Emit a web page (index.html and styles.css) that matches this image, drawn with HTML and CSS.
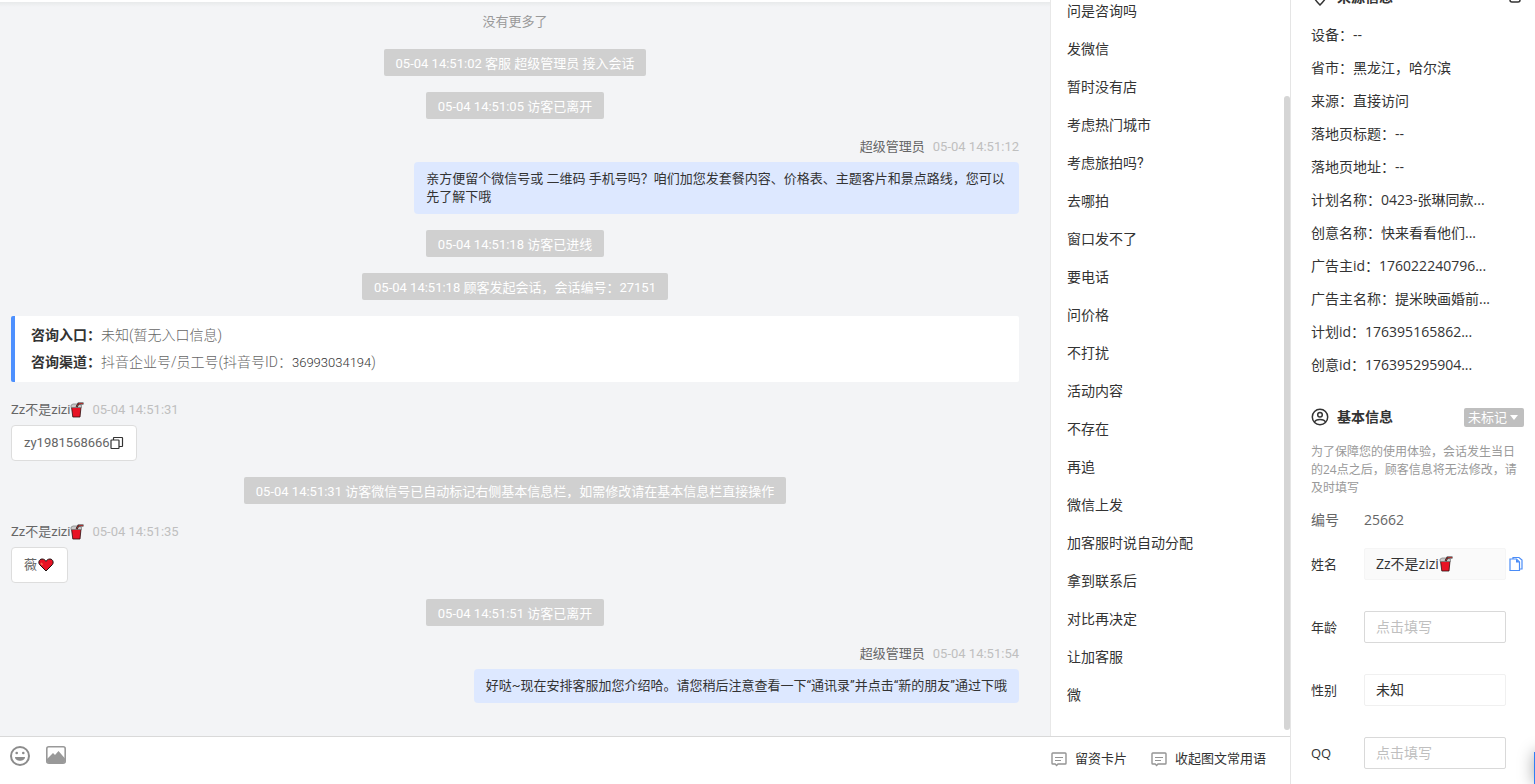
FILE: index.html
```html
<!DOCTYPE html>
<html lang="zh-CN">
<head>
<meta charset="utf-8">
<title>客服会话</title>
<link rel="stylesheet" href="styles.css">
</head>
<body>
<svg class="sprite" aria-hidden="true">
  <symbol id="cup" viewBox="0 0 14 16">
    <path d="M1.500 5h9.500l-1 10H2.800z" fill="#e81224" stroke="#2b1010" stroke-width=".8"/>
    <path d="M1 3.200 3 2h5l3.500 1.200V5.500H1z" fill="#c9c9c9" stroke="#777" stroke-width=".7"/>
    <path d="M6.500 5 8.500 1.500h5" fill="none" stroke="#222" stroke-width="2"/>
    <path d="M6.700 4.600 8.700 1.500H13" fill="none" stroke="#c33" stroke-width=".8"/>
  </symbol>
  <symbol id="card" viewBox="0 0 16 16">
    <path d="M1.800 2h12.400q.8 0 .8.8v9.400q0 .8-.8.8H7l-1.400 1.400L4.200 13H1.800q-.8 0-.8-.8V2.800q0-.8.8-.8z" fill="none" stroke="#949494" stroke-width="1.400"/>
    <path d="M4 6.500h8M4 9.500h6" stroke="#949494" stroke-width="1.200"/>
  </symbol>
</svg>
<div class="app">
  <main class="workspace">
    <section class="chat">
      <p class="end">没有更多了</p>
      <p class="pill">05-04 14:51:02 客服 超级管理员 接入会话</p>
      <p class="pill">05-04 14:51:05 访客已离开</p>
      <article class="message mine">
        <header><span>超级管理员</span><time>05-04 14:51:12</time></header>
        <p class="bubble">亲方便留个微信号或 二维码 手机号吗？咱们加您发套餐内容、价格表、主题客片和景点路线，您可以先了解下哦</p>
      </article>
      <p class="pill">05-04 14:51:18 访客已进线</p>
      <p class="pill">05-04 14:51:18 顾客发起会话，会话编号：27151</p>
      <div class="entry">
        <p><b>咨询入口：</b>未知(暂无入口信息)</p>
        <p><b>咨询渠道：</b>抖音企业号/员工号(抖音号ID：<span class="num">36993034194</span>)</p>
      </div>
      <article class="message">
        <header><span>Zz不是zizi<svg class="cup"><use href="#cup"/></svg></span><time>05-04 14:51:31</time></header>
        <p class="bubble">zy1981568666<button class="copy" aria-label="复制"><svg viewBox="0 0 14 14"><path d="M1 4.500q0-.5.500-.5h7q.5 0 .5.500v7.500q0 .5-.5.500h-7q-.5 0-.5-.5zM3.500 4V2q0-.5.500-.5h8q.5 0 .5.500v8q0 .5-.5.500H9" fill="none" stroke="#333" stroke-width="1.200"/></svg></button></p>
      </article>
      <p class="pill">05-04 14:51:31 访客微信号已自动标记右侧基本信息栏，如需修改请在基本信息栏直接操作</p>
      <article class="message">
        <header><span>Zz不是zizi<svg class="cup"><use href="#cup"/></svg></span><time>05-04 14:51:35</time></header>
        <p class="bubble">薇<svg class="heart" viewBox="0 0 16 14"><path d="M8 13 1.600 6.600C.2 4.800.8 1.200 4 1c2 0 3.200 1 4 2.400C8.800 2 10 1 12 1c3.200.2 3.800 3.800 2.400 5.600z" fill="#e81224" stroke="#1c1010" stroke-width="1"/><path d="M3 5 4.500 7" stroke="#f06b50" stroke-width="1.500"/></svg></p>
      </article>
      <p class="pill">05-04 14:51:51 访客已离开</p>
      <article class="message mine">
        <header><span>超级管理员</span><time>05-04 14:51:54</time></header>
        <p class="bubble">好哒~现在安排客服加您介绍哈。请您稍后注意查看一下“通讯录”并点击“新的朋友”通过下哦</p>
      </article>
    </section>
    <aside class="phrases">
      <ul>
        <li>问是咨询吗</li><li>发微信</li><li>暂时没有店</li><li>考虑热门城市</li><li>考虑旅拍吗?</li><li>去哪拍</li><li>窗口发不了</li><li>要电话</li><li>问价格</li><li>不打扰</li><li>活动内容</li><li>不存在</li><li>再追</li><li>微信上发</li><li>加客服时说自动分配</li><li>拿到联系后</li><li>对比再决定</li><li>让加客服</li><li>微</li>
      </ul>
      <span class="thumb"></span>
    </aside>
    <footer class="toolbar">
      <button aria-label="表情"><svg viewBox="0 0 20 20"><circle cx="10" cy="10" r="9" fill="none" stroke="#8c8c8c" stroke-width="2"/><circle cx="6.700" cy="7" r="1.300" fill="#8c8c8c"/><circle cx="13.300" cy="7" r="1.300" fill="#8c8c8c"/><path d="M5 11h10c0 5-10 5-10 0z" fill="#8c8c8c"/></svg></button>
      <button aria-label="图片"><svg viewBox="0 0 20 20"><rect x=".8" y=".8" width="18.400" height="16.400" rx="2" fill="none" stroke="#999" stroke-width="1.600"/><path d="M1 13 7 7l2 2 3.500-4L19 12.500V15q0 2-2 2H3q-2 0-2-2z" fill="#999"/></svg></button>
      <div class="actions">
        <button class="action"><svg><use href="#card"/></svg>留资卡片</button>
        <button class="action"><svg><use href="#card"/></svg>收起图文常用语</button>
      </div>
    </footer>
  </main>
  <aside class="profile">
    <section class="source">
      <h2><svg viewBox="0 0 18 18"><path d="M9 17C5.500 13.500 2.500 10.500 2.500 7.500a6.500 6.500 0 0 1 13 0C15.500 10.500 12.500 13.500 9 17z" fill="none" stroke="#333" stroke-width="1.500"/><circle cx="9" cy="7.500" r="2" fill="none" stroke="#333" stroke-width="1.500"/></svg>来源信息<button class="source-copy" aria-label="复制"><svg viewBox="0 0 12 12"><rect x="1" y="1" width="10" height="10" rx="2" fill="none" stroke="#333" stroke-width="1.500"/></svg></button></h2>
      <p>设备：--</p><p>省市：黑龙江，哈尔滨</p><p>来源：直接访问</p><p>落地页标题：--</p><p>落地页地址：--</p><p>计划名称：0423-张琳同款...</p><p>创意名称：快来看看他们...</p><p>广告主id：176022240796...</p><p>广告主名称：提米映画婚前...</p><p>计划id：176395165862...</p><p>创意id：176395295904...</p>
    </section>
    <section class="basic">
      <h2><svg viewBox="0 0 18 18" fill="none" stroke="#333" stroke-width="1.500"><circle cx="9" cy="9" r="7.700"/><circle cx="9" cy="6.800" r="2.300"/><path d="M3.500 14c1.500-3.300 9.500-3.300 11 0"/></svg>基本信息<button class="tag">未标记<i></i></button></h2>
      <p class="notice">为了保障您的使用体验，会话发生当日的24点之后，顾客信息将无法修改，请及时填写</p>
      <dl><dt>编号</dt><dd>25662</dd></dl>
      <div class="field"><label for="name">姓名</label><div class="control filled"><input id="name" value="Zz不是zizi"><svg class="cup"><use href="#cup"/></svg></div><button class="copy-name" aria-label="复制姓名"><svg viewBox="0 0 14 16"><path d="M4 3V1.500h6L13 4v9h-2.500" fill="none" stroke="#4a8cf7" stroke-width="1.200"/><path d="M1 3h6.500L10.500 6v8.500H1z" fill="#fff" stroke="#4a8cf7" stroke-width="1.200"/><path d="M7 3v3.500h3.500z" fill="#4a8cf7"/></svg></button></div>
      <div class="field"><label for="age">年龄</label><div class="control"><input id="age" placeholder="点击填写"></div></div>
      <div class="field"><label for="sex">性别</label><div class="control quiet"><select id="sex"><option>未知</option><option>男</option><option>女</option></select></div></div>
      <div class="field"><label for="qq">QQ</label><div class="control"><input id="qq" placeholder="点击填写"></div></div>
    </section>
    <span class="float"></span>
  </aside>
</div>
</body>
</html>
```
FILE: styles.css
```css
* { box-sizing: border-box; margin: 0; padding: 0; }
body { font: 13px/18px Roboto, "Noto Sans CJK SC", sans-serif; color: #333; background: #fff; }
button { border: 0; background: none; font: inherit; color: inherit; cursor: pointer; }
ul { list-style: none; }
.sprite { position: absolute; width: 0; height: 0; }
.app { display: grid; grid-template-columns: minmax(0, 1fr) 245px; height: 100vh; overflow: hidden; }
.workspace { display: grid; grid-template-columns: minmax(0, 1fr) 240px; grid-template-rows: minmax(0, 1fr) 48px; min-height: 0; }

.chat { display: flex; flex-direction: column; align-items: center; gap: 16px; padding: 11px 31px 0 11px; overflow: hidden; border-top: 2px solid #fff; background: linear-gradient(#e8eaeb, #f3f4f6 5px); }
.end { margin-bottom: 2px; color: #999; }
.pill { padding: 6px 12px 3px; border-radius: 2px; background: #d0d0d0; color: #fff; }
.message { align-self: stretch; display: flex; flex-direction: column; align-items: flex-start; gap: 4px; }
.message header { display: flex; gap: 8px; padding-top: 1px; line-height: 22px; color: #666; }
.message header span { display: flex; align-items: center; }
.message time { color: #bfbfbf; }
.bubble { display: flex; align-items: center; padding: 8px 12px; border: 1px solid #ddd; border-radius: 4px; background: #fff; color: #666; }
.mine { align-items: flex-end; }
.mine .bubble { display: block; max-width: 60%; border: 0; background: #dde8ff; color: #333; }
.cup { width: 14px; height: 16px; }
.heart { width: 16px; height: 14px; margin: 0 1px; }
.copy svg { display: block; width: 14px; height: 14px; }
.entry { align-self: stretch; padding: 6px 16px; border-left: 4px solid #4d90fe; border-radius: 2px; background: #fff; color: #666; font-size: 14px; font-weight: 300; line-height: 27px; }
.entry b { color: #333; font-weight: 700; }
.entry .num { color: #333; font-size: 13px; }

.phrases { position: relative; display: flex; flex-direction: column; justify-content: flex-end; padding: 0 16px 22px; overflow: hidden; border-left: 1px solid #e8e8e8; font-size: 14px; line-height: 38px; }
.thumb { position: absolute; right: 0; top: 96px; bottom: 6px; width: 6px; border-radius: 3px; background: #d5d5d5; }

.toolbar { grid-column: 1 / -1; display: flex; align-items: flex-start; gap: 16px; padding: 9px 24px 0 10px; border-top: 1px solid #d9d9d9; }
.toolbar svg { display: block; width: 20px; height: 20px; }
.actions { display: flex; gap: 24px; margin-left: auto; padding-top: 4px; }
.action { display: flex; align-items: center; gap: 8px; }
.toolbar .action svg { width: 16px; height: 16px; }

.profile { position: relative; min-height: 0; overflow: hidden; padding: 0 11px 0 20px; border-left: 1px solid #e5e5e5; font-family: "Open Sans", "Noto Sans CJK SC", sans-serif; font-size: 14px; line-height: 33px; }
.profile h2 { display: flex; align-items: center; gap: 8px; height: 28px; font-size: 14px; line-height: 28px; }
.profile h2 svg { width: 18px; height: 18px; }
.source { margin-top: -17px; }
.source h2 { margin-bottom: 7px; }
.source-copy { margin-left: auto; margin-right: 3px; }
.source-copy svg { display: block; }
.profile h2 .source-copy svg { width: 12px; height: 12px; }
.basic { padding-top: 22px; }
.tag { display: flex; align-items: center; gap: 3px; height: 19px; margin-left: auto; padding: 0 6px 0 4px; border-radius: 2px; background: #bfbfbf; color: #fff; font-size: 13px; font-weight: 400; line-height: 19px; }
.tag i { border: 4px solid transparent; border-top: 5px solid #fff; border-bottom: 0; }
.notice { padding-top: 12px; color: #999; font-size: 12px; line-height: 18px; }
.basic dl { display: flex; height: 46px; margin-bottom: 5px; line-height: 46px; color: #666; }
.basic dt { width: 53px; }
.field { display: flex; align-items: center; height: 32px; margin-bottom: 31px; }
.field label { width: 53px; font-size: 13px; }
.control { display: flex; align-items: center; width: 142px; height: 32px; padding: 0 11px; border: 1px solid #d9d9d9; border-radius: 2px; }
.control input, .control select { width: 100%; min-width: 0; border: 0; outline: 0; background: none; font: inherit; line-height: 20px; color: #333; appearance: none; }
.control input::placeholder { color: #bfbfbf; }
.filled { border-color: #f5f5f5; background: #fafafa; }
.filled input { field-sizing: content; width: auto; }
.quiet { border-color: #f0f0f0; }
.copy-name { margin-left: 3px; }
.copy-name svg { display: block; width: 14px; height: 16px; }
.float { position: absolute; right: -40px; bottom: 0; width: 41px; height: 32px; background: #2f7ff5; box-shadow: 0 0 16px rgba(0, 0, 0, .35); }
```
